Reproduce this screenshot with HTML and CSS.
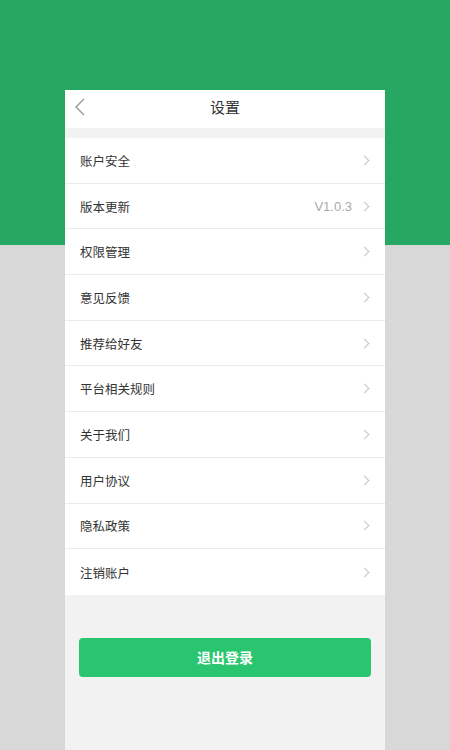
FILE: index.html
```html
<!DOCTYPE html>
<html lang="zh">
<head>
<meta charset="utf-8">
<link rel="stylesheet" href="styles.css">
</head>
<body>
<div class="bg-top"></div>
<div class="phone">
  <header class="nav">
    <svg class="back" width="12" height="20" viewBox="0 0 12 20"><path d="M10 2 L2 10 L10 18" fill="none" stroke="#999" stroke-width="1.4"/></svg>
    <div class="title">设置</div>
  </header>
  <div class="gap"></div>
  <ul class="list">
    <li class="row"><span>账户安全</span><i class="chev"></i></li>
    <li class="row"><span>版本更新</span><span class="right"><span class="ver">V1.0.3</span><i class="chev"></i></span></li>
    <li class="row"><span>权限管理</span><i class="chev"></i></li>
    <li class="row"><span>意见反馈</span><i class="chev"></i></li>
    <li class="row"><span>推荐给好友</span><i class="chev"></i></li>
    <li class="row"><span>平台相关规则</span><i class="chev"></i></li>
    <li class="row"><span>关于我们</span><i class="chev"></i></li>
    <li class="row"><span>用户协议</span><i class="chev"></i></li>
    <li class="row"><span>隐私政策</span><i class="chev"></i></li>
    <li class="row last"><span>注销账户</span><i class="chev"></i></li>
  </ul>
  <div class="footer">
    <button class="logout">退出登录</button>
  </div>
</div>
</body>
</html>
```
FILE: styles.css
```css
html, body {
  margin: 0;
  padding: 0;
  height: 100%;
}
body {
  background: #d8d8d8;
  font-family: "Noto Sans CJK SC", "Noto Sans", sans-serif;
  color: #333;
  position: relative;
  overflow: hidden;
}
.bg-top {
  height: 245px;
  background: #26a862;
}
.phone {
  position: absolute;
  left: 65px;
  top: 90px;
  width: 320px;
  height: 660px;
  background: #f2f2f2;
  display: flex;
  flex-direction: column;
}
.nav {
  height: 38px;
  box-sizing: border-box;
  padding-bottom: 5px;
  background: #fff;
  display: flex;
  align-items: center;
  justify-content: center;
  position: relative;
}
.back {
  position: absolute;
  left: 9px;
  top: 7px;
}
.title {
  font-size: 15px;
  color: #333;
  line-height: 1;
}
.gap {
  height: 10px;
}
.list {
  list-style: none;
  margin: 0;
  padding: 0;
  background: #fff;
}
.row {
  height: 45.7px;
  box-sizing: border-box;
  border-bottom: 1px solid #ebebeb;
  display: flex;
  align-items: center;
  justify-content: space-between;
  padding: 0 14px 0 15px;
  font-size: 12.5px;
  color: #333;
}
.row.last {
  border-bottom: none;
}
.right {
  display: flex;
  align-items: center;
}
.ver {
  color: #aaa;
  font-family: "Liberation Sans", "Noto Sans CJK SC", sans-serif;
  font-size: 13px;
  margin-right: 9px;
}
.chev {
  width: 6px;
  height: 6px;
  border-top: 1px solid #c4c4c4;
  border-right: 1px solid #c4c4c4;
  transform: rotate(45deg);
  margin-right: 3px;
}
.footer {
  padding: 43px 14px 0 14px;
}
.logout {
  display: block;
  width: 100%;
  height: 39px;
  border: none;
  border-radius: 4px;
  background: #2ac56f;
  color: #fff;
  font-family: "Noto Sans CJK SC", sans-serif;
  font-size: 14px;
  font-weight: bold;
}
```
